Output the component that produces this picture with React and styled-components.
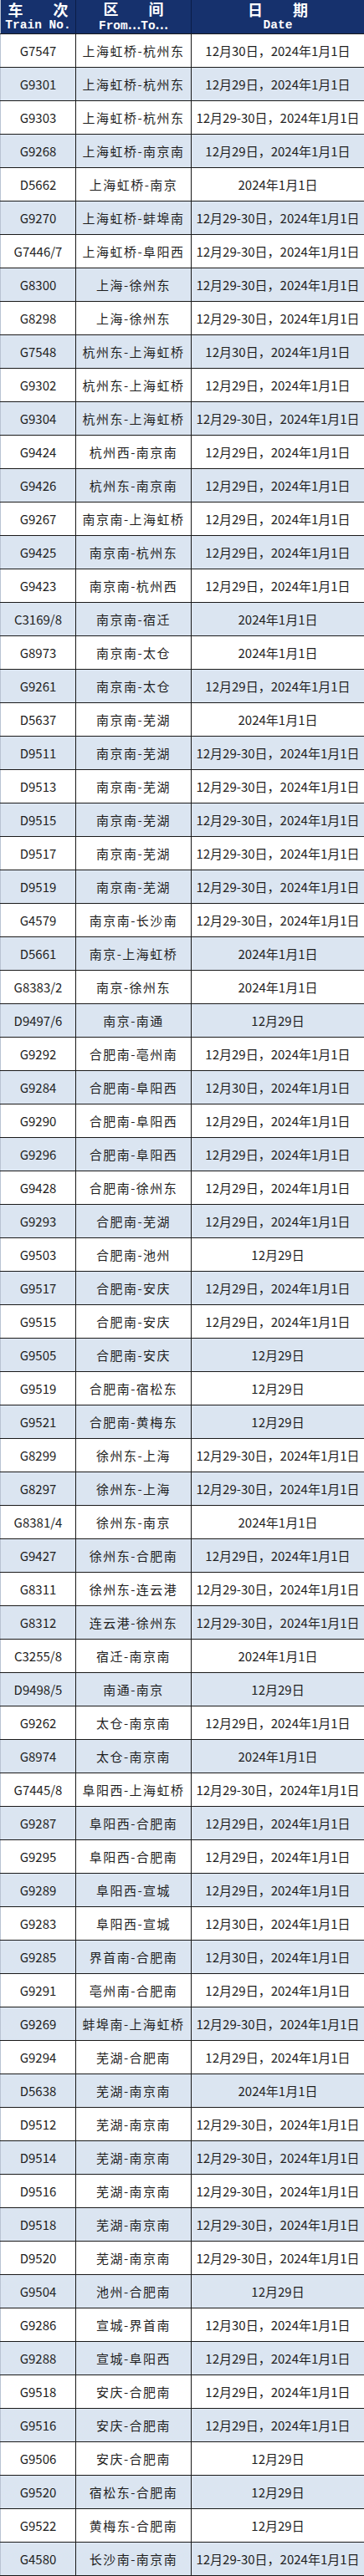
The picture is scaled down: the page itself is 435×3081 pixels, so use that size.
import React from "react";
import styled, { createGlobalStyle } from "styled-components";

const Global = createGlobalStyle`
  html, body { margin: 0; padding: 0; background: #ffffff; }
  body { font-family: "Noto Sans CJK SC", "Noto Sans", sans-serif; }
`;

const rows = [
  ["G7547", "上海虹桥-杭州东", "12月30日，2024年1月1日"],
  ["G9301", "上海虹桥-杭州东", "12月29日，2024年1月1日"],
  ["G9303", "上海虹桥-杭州东", "12月29-30日，2024年1月1日"],
  ["G9268", "上海虹桥-南京南", "12月29日，2024年1月1日"],
  ["D5662", "上海虹桥-南京", "2024年1月1日"],
  ["G9270", "上海虹桥-蚌埠南", "12月29-30日，2024年1月1日"],
  ["G7446/7", "上海虹桥-阜阳西", "12月29-30日，2024年1月1日"],
  ["G8300", "上海-徐州东", "12月29-30日，2024年1月1日"],
  ["G8298", "上海-徐州东", "12月29-30日，2024年1月1日"],
  ["G7548", "杭州东-上海虹桥", "12月30日，2024年1月1日"],
  ["G9302", "杭州东-上海虹桥", "12月29日，2024年1月1日"],
  ["G9304", "杭州东-上海虹桥", "12月29-30日，2024年1月1日"],
  ["G9424", "杭州西-南京南", "12月29日，2024年1月1日"],
  ["G9426", "杭州东-南京南", "12月29日，2024年1月1日"],
  ["G9267", "南京南-上海虹桥", "12月29日，2024年1月1日"],
  ["G9425", "南京南-杭州东", "12月29日，2024年1月1日"],
  ["G9423", "南京南-杭州西", "12月29日，2024年1月1日"],
  ["C3169/8", "南京南-宿迁", "2024年1月1日"],
  ["G8973", "南京南-太仓", "2024年1月1日"],
  ["G9261", "南京南-太仓", "12月29日，2024年1月1日"],
  ["D5637", "南京南-芜湖", "2024年1月1日"],
  ["D9511", "南京南-芜湖", "12月29-30日，2024年1月1日"],
  ["D9513", "南京南-芜湖", "12月29-30日，2024年1月1日"],
  ["D9515", "南京南-芜湖", "12月29-30日，2024年1月1日"],
  ["D9517", "南京南-芜湖", "12月29-30日，2024年1月1日"],
  ["D9519", "南京南-芜湖", "12月29-30日，2024年1月1日"],
  ["G4579", "南京南-长沙南", "12月29-30日，2024年1月1日"],
  ["D5661", "南京-上海虹桥", "2024年1月1日"],
  ["G8383/2", "南京-徐州东", "2024年1月1日"],
  ["D9497/6", "南京-南通", "12月29日"],
  ["G9292", "合肥南-亳州南", "12月29日，2024年1月1日"],
  ["G9284", "合肥南-阜阳西", "12月30日，2024年1月1日"],
  ["G9290", "合肥南-阜阳西", "12月29日，2024年1月1日"],
  ["G9296", "合肥南-阜阳西", "12月29日，2024年1月1日"],
  ["G9428", "合肥南-徐州东", "12月29日，2024年1月1日"],
  ["G9293", "合肥南-芜湖", "12月29日，2024年1月1日"],
  ["G9503", "合肥南-池州", "12月29日"],
  ["G9517", "合肥南-安庆", "12月29日，2024年1月1日"],
  ["G9515", "合肥南-安庆", "12月29日，2024年1月1日"],
  ["G9505", "合肥南-安庆", "12月29日"],
  ["G9519", "合肥南-宿松东", "12月29日"],
  ["G9521", "合肥南-黄梅东", "12月29日"],
  ["G8299", "徐州东-上海", "12月29-30日，2024年1月1日"],
  ["G8297", "徐州东-上海", "12月29-30日，2024年1月1日"],
  ["G8381/4", "徐州东-南京", "2024年1月1日"],
  ["G9427", "徐州东-合肥南", "12月29日，2024年1月1日"],
  ["G8311", "徐州东-连云港", "12月29-30日，2024年1月1日"],
  ["G8312", "连云港-徐州东", "12月29-30日，2024年1月1日"],
  ["C3255/8", "宿迁-南京南", "2024年1月1日"],
  ["D9498/5", "南通-南京", "12月29日"],
  ["G9262", "太仓-南京南", "12月29日，2024年1月1日"],
  ["G8974", "太仓-南京南", "2024年1月1日"],
  ["G7445/8", "阜阳西-上海虹桥", "12月29-30日，2024年1月1日"],
  ["G9287", "阜阳西-合肥南", "12月29日，2024年1月1日"],
  ["G9295", "阜阳西-合肥南", "12月29日，2024年1月1日"],
  ["G9289", "阜阳西-宣城", "12月29日，2024年1月1日"],
  ["G9283", "阜阳西-宣城", "12月30日，2024年1月1日"],
  ["G9285", "界首南-合肥南", "12月30日，2024年1月1日"],
  ["G9291", "亳州南-合肥南", "12月29日，2024年1月1日"],
  ["G9269", "蚌埠南-上海虹桥", "12月29-30日，2024年1月1日"],
  ["G9294", "芜湖-合肥南", "12月29日，2024年1月1日"],
  ["D5638", "芜湖-南京南", "2024年1月1日"],
  ["D9512", "芜湖-南京南", "12月29-30日，2024年1月1日"],
  ["D9514", "芜湖-南京南", "12月29-30日，2024年1月1日"],
  ["D9516", "芜湖-南京南", "12月29-30日，2024年1月1日"],
  ["D9518", "芜湖-南京南", "12月29-30日，2024年1月1日"],
  ["D9520", "芜湖-南京南", "12月29-30日，2024年1月1日"],
  ["G9504", "池州-合肥南", "12月29日"],
  ["G9286", "宣城-界首南", "12月30日，2024年1月1日"],
  ["G9288", "宣城-阜阳西", "12月29日，2024年1月1日"],
  ["G9518", "安庆-合肥南", "12月29日，2024年1月1日"],
  ["G9516", "安庆-合肥南", "12月29日，2024年1月1日"],
  ["G9506", "安庆-合肥南", "12月29日"],
  ["G9520", "宿松东-合肥南", "12月29日"],
  ["G9522", "黄梅东-合肥南", "12月29日"],
  ["G4580", "长沙南-南京南", "12月29-30日，2024年1月1日"],
];

const Table = styled.div`
  width: 435px;
  border-bottom: 1px solid #1a1a1a;
`;

const Row = styled.div`
  display: grid;
  grid-template-columns: 90px 138px 1fr;
  height: 40px;
  box-sizing: border-box;
  background: ${(p) => (p.$shaded ? "#dbe5f1" : "#ffffff")};
  border-top: 1px solid #1a1a1a;
`;

const HeadRow = styled.div`
  display: grid;
  grid-template-columns: 90px 138px 1fr;
  height: 40px;
  background: #16316d;
`;

const Cell = styled.div`
  display: flex;
  align-items: center;
  justify-content: center;
  border-left: 1px solid ${(p) => (p.$first ? "#b9c3d2" : "#1a1a1a")};
  font-family: "Noto Sans CJK SC", "Noto Sans", sans-serif;
  font-size: 15px;
  color: #1e1e1e;
  letter-spacing: ${(p) => p.$spacing || "0px"};
  white-space: nowrap;
  overflow: hidden;
`;

const HeadCell = styled.div`
  display: flex;
  flex-direction: column;
  align-items: center;
  justify-content: center;
  border-left: 1px solid ${(p) => (p.$first ? "#b9c3d2" : "#0b1d47")};
  color: #ffffff;
  white-space: pre;
`;

const HeadZh = styled.span`
  font-family: "Noto Sans CJK SC", sans-serif;
  font-weight: 700;
  font-size: 18px;
  line-height: 19px;
`;

const HeadEn = styled.span`
  font-family: "Liberation Mono", "DejaVu Sans Mono", monospace;
  font-weight: 700;
  font-size: 14.5px;
  line-height: 18px;
`;

const Ell = styled.span`
  font-family: "Noto Sans CJK SC", sans-serif;
  font-weight: 700;
  font-size: 14px;
`;

export default function App() {
  return (
    <>
      <Global />
      <Table>
        <HeadRow>
          <HeadCell $first>
            <HeadZh>{"车　　次"}</HeadZh>
            <HeadEn>Train No.</HeadEn>
          </HeadCell>
          <HeadCell>
            <HeadZh>{"区　　间"}</HeadZh>
            <HeadEn>
              From<Ell>…</Ell>To<Ell>…</Ell>
            </HeadEn>
          </HeadCell>
          <HeadCell>
            <HeadZh>{"日　　期"}</HeadZh>
            <HeadEn>Date</HeadEn>
          </HeadCell>
        </HeadRow>
        {rows.map(([no, route, date], i) => (
          <Row key={no + i} $shaded={i % 2 === 1}>
            <Cell $first>{no}</Cell>
            <Cell $spacing="1.5px">{route}</Cell>
            <Cell>{date}</Cell>
          </Row>
        ))}
      </Table>
    </>
  );
}
